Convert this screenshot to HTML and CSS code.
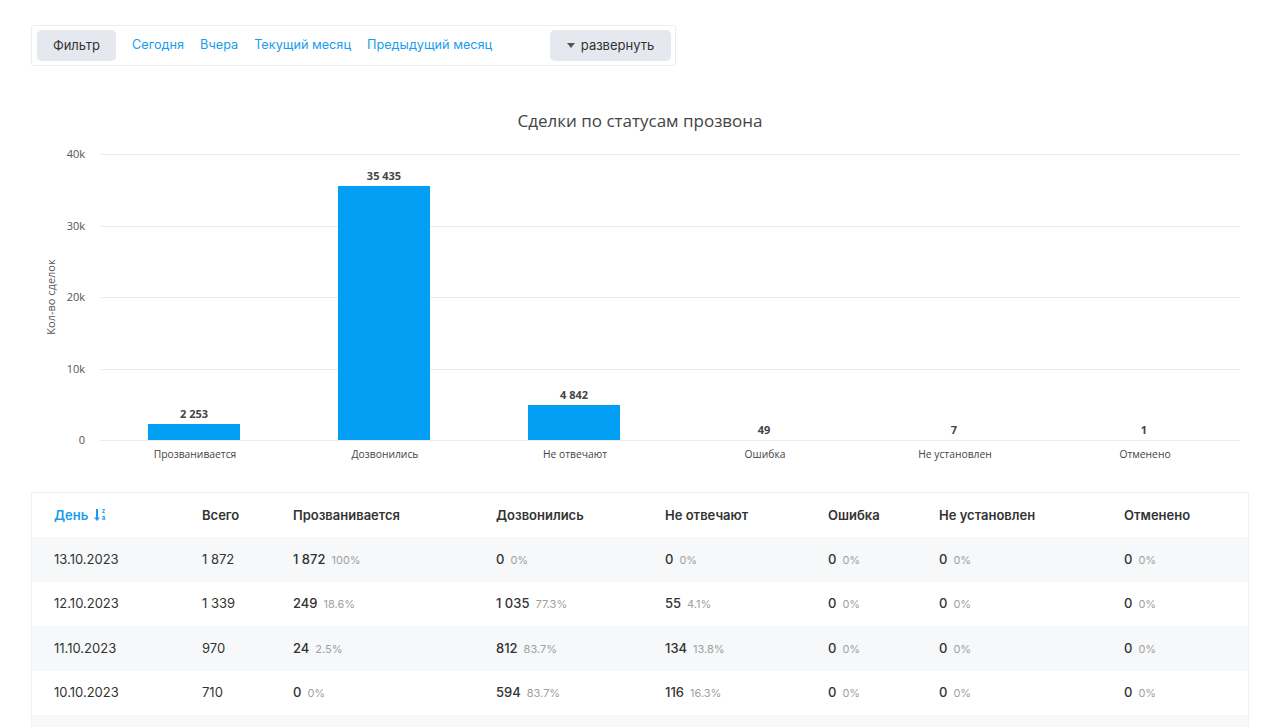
FILE: index.html
```html
<!DOCTYPE html>
<html lang="ru">
<head>
<meta charset="utf-8">
<title>Сделки по статусам прозвона</title>
<link rel="stylesheet" href="styles.css">
</head>
<body>
<div class="page">
  <div class="filter-bar">
    <button class="btn btn-filter">Фильтр</button>
    <a class="link" href="#">Сегодня</a>
    <a class="link" href="#">Вчера</a>
    <a class="link" href="#">Текущий месяц</a>
    <a class="link" href="#">Предыдущий месяц</a>
    <button class="btn btn-expand"><span class="caret"></span>развернуть</button>
  </div>

  <svg class="chart" width="1218" height="397" viewBox="0 0 1218 397">
    <text class="chart-title" x="609" y="46" text-anchor="middle">Сделки по статусам прозвона</text>
    <g class="grid">
      <line x1="69" x2="1209" y1="73.5" y2="73.5"/>
      <line x1="69" x2="1209" y1="145.5" y2="145.5"/>
      <line x1="69" x2="1209" y1="216.5" y2="216.5"/>
      <line x1="69" x2="1209" y1="288.5" y2="288.5"/>
      <line x1="69" x2="1209" y1="359.5" y2="359.5"/>
    </g>
    <g class="ylabels">
      <text x="54" y="77" text-anchor="end">40k</text>
      <text x="54" y="149" text-anchor="end">30k</text>
      <text x="54" y="220" text-anchor="end">20k</text>
      <text x="54" y="292" text-anchor="end">10k</text>
      <text x="54" y="363" text-anchor="end">0</text>
    </g>
    <text class="ytitle" transform="translate(24 216) rotate(-90)" text-anchor="middle">Кол-во сделок</text>
    <g class="bars">
      <rect x="117" y="343" width="92" height="16"/>
      <rect x="307" y="105" width="92" height="254"/>
      <rect x="497" y="324" width="92" height="35"/>
    </g>
    <g class="vlabels">
      <text x="163" y="337" text-anchor="middle">2 253</text>
      <text x="353" y="99" text-anchor="middle">35 435</text>
      <text x="543" y="318" text-anchor="middle">4 842</text>
      <text x="733" y="353" text-anchor="middle">49</text>
      <text x="923" y="353" text-anchor="middle">7</text>
      <text x="1113" y="353" text-anchor="middle">1</text>
    </g>
    <g class="xlabels">
      <text x="164" y="377" text-anchor="middle">Прозванивается</text>
      <text x="354" y="377" text-anchor="middle">Дозвонились</text>
      <text x="544" y="377" text-anchor="middle">Не отвечают</text>
      <text x="734" y="377" text-anchor="middle">Ошибка</text>
      <text x="924" y="377" text-anchor="middle">Не установлен</text>
      <text x="1114" y="377" text-anchor="middle">Отменено</text>
    </g>
  </svg>

  <div class="table">
    <div class="row head">
      <div class="cell sort">День
        <svg class="sort-icon" width="12" height="16" viewBox="0 0 12 16">
          <path d="M3 2v10" stroke="#1a9cf0" stroke-width="2" fill="none"/>
          <path d="M0 10.5 L3 14 L6 10.5 Z" fill="#1a9cf0"/>
          <text x="9.5" y="6" text-anchor="middle">z</text>
          <text x="9.5" y="13" text-anchor="middle">a</text>
        </svg>
      </div>
      <div class="cell">Всего</div>
      <div class="cell">Прозванивается</div>
      <div class="cell">Дозвонились</div>
      <div class="cell">Не отвечают</div>
      <div class="cell">Ошибка</div>
      <div class="cell">Не установлен</div>
      <div class="cell">Отменено</div>
    </div>
    <div class="row">
      <div class="cell">13.10.2023</div>
      <div class="cell">1 872</div>
      <div class="cell"><b>1 872</b><span class="pct">100%</span></div>
      <div class="cell"><b>0</b><span class="pct">0%</span></div>
      <div class="cell"><b>0</b><span class="pct">0%</span></div>
      <div class="cell"><b>0</b><span class="pct">0%</span></div>
      <div class="cell"><b>0</b><span class="pct">0%</span></div>
      <div class="cell"><b>0</b><span class="pct">0%</span></div>
    </div>
    <div class="row">
      <div class="cell">12.10.2023</div>
      <div class="cell">1 339</div>
      <div class="cell"><b>249</b><span class="pct">18.6%</span></div>
      <div class="cell"><b>1 035</b><span class="pct">77.3%</span></div>
      <div class="cell"><b>55</b><span class="pct">4.1%</span></div>
      <div class="cell"><b>0</b><span class="pct">0%</span></div>
      <div class="cell"><b>0</b><span class="pct">0%</span></div>
      <div class="cell"><b>0</b><span class="pct">0%</span></div>
    </div>
    <div class="row">
      <div class="cell">11.10.2023</div>
      <div class="cell">970</div>
      <div class="cell"><b>24</b><span class="pct">2.5%</span></div>
      <div class="cell"><b>812</b><span class="pct">83.7%</span></div>
      <div class="cell"><b>134</b><span class="pct">13.8%</span></div>
      <div class="cell"><b>0</b><span class="pct">0%</span></div>
      <div class="cell"><b>0</b><span class="pct">0%</span></div>
      <div class="cell"><b>0</b><span class="pct">0%</span></div>
    </div>
    <div class="row">
      <div class="cell">10.10.2023</div>
      <div class="cell">710</div>
      <div class="cell"><b>0</b><span class="pct">0%</span></div>
      <div class="cell"><b>594</b><span class="pct">83.7%</span></div>
      <div class="cell"><b>116</b><span class="pct">16.3%</span></div>
      <div class="cell"><b>0</b><span class="pct">0%</span></div>
      <div class="cell"><b>0</b><span class="pct">0%</span></div>
      <div class="cell"><b>0</b><span class="pct">0%</span></div>
    </div>
    <div class="row"></div>
  </div>
</div>
</body>
</html>
```

FILE: styles.css
```css
html, body {
  margin: 0;
  padding: 0;
  background: #fff;
}
body {
  font-family: Inter, "Noto Sans", sans-serif;
  color: #333;
  overflow: hidden;
}
.page {
  padding: 25px 31px 0 31px;
}
.filter-bar {
  display: flex;
  align-items: center;
  width: 645px;
  height: 41px;
  box-sizing: border-box;
  border: 1px solid #eceef2;
  border-radius: 2px;
  padding: 0 4px 0 5px;
}
.btn {
  border: none;
  background: #e6e8ef;
  border-radius: 5px;
  height: 31px;
  font-family: inherit;
  font-size: 13px;
  color: #333;
  padding: 0 0 2px 0;
  cursor: pointer;
}
.btn-filter {
  width: 79px;
  margin-right: 16px;
}
.link {
  font-size: 12.7px;
  color: #1a9cf0;
  text-decoration: none;
  margin-right: 16px;
  padding-bottom: 2px;
}
.btn-expand {
  margin-left: auto;
  width: 121px;
  display: flex;
  align-items: center;
  justify-content: center;
}
.caret {
  width: 0;
  height: 0;
  border-left: 4px solid transparent;
  border-right: 4px solid transparent;
  border-top: 5px solid #555;
  margin-right: 6px;
  margin-top: 2px;
}
.chart {
  display: block;
  margin-top: 15px;
  font-family: "Open Sans", "DejaVu Sans", sans-serif;
}
.chart-title {
  font-size: 17px;
  fill: #444;
}
.grid line {
  stroke: #e9ebee;
  stroke-width: 1;
}
.ylabels text {
  font-size: 11px;
  fill: #555;
}
.ytitle {
  font-size: 11px;
  fill: #555;
}
.bars rect {
  fill: #039ff4;
}
.vlabels text {
  font-size: 11px;
  font-weight: 700;
  fill: #444;
}
.xlabels text {
  font-size: 10.3px;
  fill: #444;
}
.table {
  margin-top: 14px;
  width: 1218px;
  box-sizing: border-box;
  border: 1px solid #eef0f3;
  border-bottom: none;
}
.row {
  display: grid;
  grid-template-columns: 148px 91px 203px 169px 163px 111px 185px 147px;
  height: 44.4px;
  align-items: center;
  font-size: 13px;
}
.row:nth-child(even) {
  background: #f6f8fa;
}
.row.head {
  font-weight: 600;
  color: #333;
}
.cell {
  padding-left: 22px;
  padding-bottom: 1px;
  white-space: nowrap;
}
.cell b {
  font-weight: 500;
}
.pct {
  font-size: 11px;
  color: #a0a0a0;
  margin-left: 6px;
}
.sort {
  color: #1a9cf0;
  display: flex;
  align-items: center;
  gap: 6px;
}
.sort-icon text {
  font-size: 6px;
  font-weight: 700;
  fill: #1a9cf0;
  font-family: Inter, sans-serif;
}
```
